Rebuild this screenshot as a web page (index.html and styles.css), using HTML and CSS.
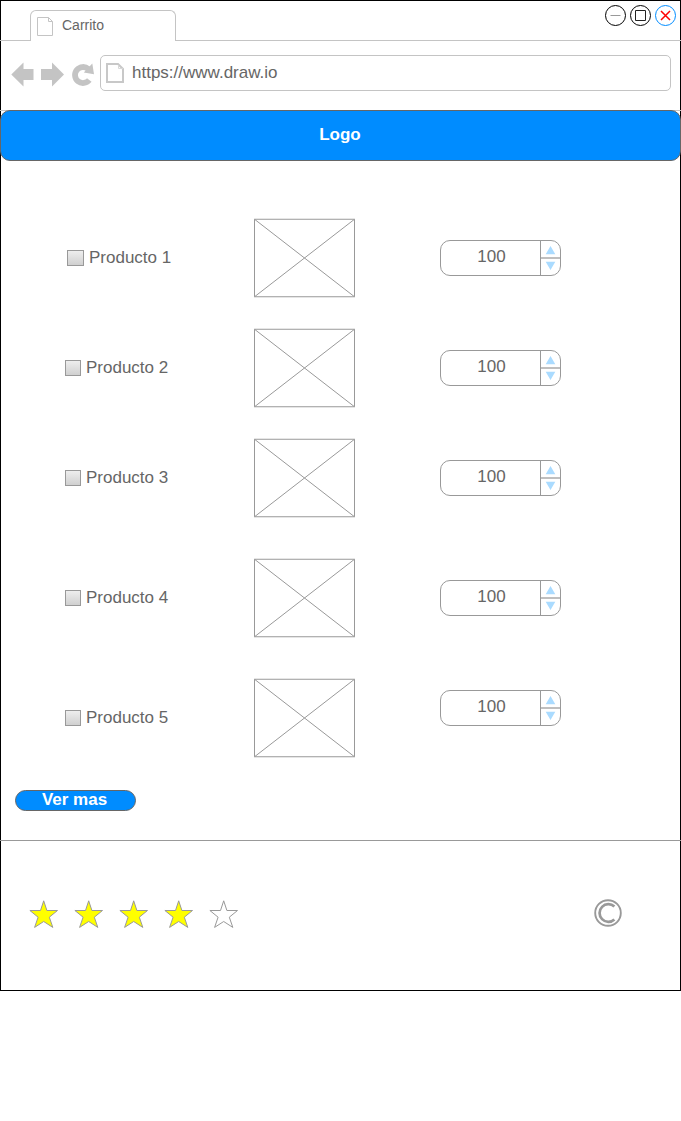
FILE: index.html
```html
<!DOCTYPE html>
<html lang="es">
<head>
<meta charset="utf-8">
<title>Carrito</title>
<link rel="stylesheet" href="styles.css">
</head>
<body>
<svg class="defs" width="0" height="0">
  <defs>
    <symbol id="placeholder" viewBox="0 0 101 80">
      <path d="M.5 1.250h100v77.500H.5zM.5 1.250l100 77.500M.5 78.750l100-77.500" fill="none" stroke="#999"/>
    </symbol>
    <symbol id="steps" viewBox="0 0 19 34">
      <path d="M4.700 13.200l4.800-8.300 4.800 8.300zM4.700 20.800h9.600l-4.800 8.300z" fill="#aadbff"/>
      <path d="M0 17h19" stroke="#aaa" stroke-width="1.500"/>
    </symbol>
    <symbol id="star" viewBox="0 0 30 30">
      <path d="M14.700 1.800L17.900 11.500H28.500L20.300 18.200 23.800 28.400 14.700 22.500 5.600 28.400 9.100 18.200.9 11.500H11.500z" stroke="#999"/>
    </symbol>
  </defs>
</svg>
<div class="window">
  <div class="tabs">
    <div class="tab">
      <svg width="16" height="19" viewBox="0 0 16 19"><path d="M.5.5h11l4 4v14H.5zM11.500.5v4h4" fill="none" stroke="#c4c4c4"/></svg>
      <span>Carrito</span>
    </div>
    <div class="controls">
      <svg width="21" height="21" viewBox="0 0 21 21" fill="none"><circle cx="10.500" cy="10.500" r="10" stroke="#000"/><path d="M5.500 10.500h10" stroke="#999"/></svg>
      <svg width="21" height="21" viewBox="0 0 21 21" fill="none"><circle cx="10.500" cy="10.500" r="10" stroke="#000"/><path d="M5.500 5.500h10v10h-10z" stroke="#222"/></svg>
      <svg width="21" height="21" viewBox="0 0 21 21" fill="none"><circle cx="10.500" cy="10.500" r="10" stroke="#008cff"/><path d="M6 6l9 9M15 6l-9 9" stroke="#f00" stroke-width="1.500"/></svg>
    </div>
  </div>
  <div class="toolbar">
    <svg class="nav" width="99" height="30" viewBox="0 0 99 30">
      <path d="M10.300 14.500L22.500 2.500V9h10v11h-10v6.500zM63 14.500L51 2.500V9H40v11h11v6.500z" fill="#c4c4c4"/>
      <path d="M88.300 20A8 8 0 1 1 87.300 9" fill="none" stroke="#c4c4c4" stroke-width="5.800"/>
      <path d="M91.300 3.500L93 14.200 82.800 12.600z" fill="#c4c4c4"/>
    </svg>
    <div class="address">
      <svg width="18" height="20" viewBox="0 0 18 20"><path d="M1 1h11L17 6v13H1z" fill="none" stroke="#c8c8c8" stroke-width="2"/><path d="M12.500 2v3.500H17" fill="none" stroke="#d8d8d8"/></svg>
      <span>https://www.draw.io</span>
    </div>
  </div>
  <div class="logo-bar"><header class="logo">Logo</header></div>
  <main class="products">
    <div class="product first">
      <label class="name"><i class="check"></i>Producto 1</label>
      <svg class="photo"><use href="#placeholder"/></svg>
      <div class="spinner"><span>100</span><svg><use href="#steps"/></svg></div>
    </div>
    <div class="product">
      <label class="name"><i class="check"></i>Producto 2</label>
      <svg class="photo"><use href="#placeholder"/></svg>
      <div class="spinner"><span>100</span><svg><use href="#steps"/></svg></div>
    </div>
    <div class="product">
      <label class="name"><i class="check"></i>Producto 3</label>
      <svg class="photo"><use href="#placeholder"/></svg>
      <div class="spinner"><span>100</span><svg><use href="#steps"/></svg></div>
    </div>
    <div class="product spaced">
      <label class="name"><i class="check"></i>Producto 4</label>
      <svg class="photo"><use href="#placeholder"/></svg>
      <div class="spinner"><span>100</span><svg><use href="#steps"/></svg></div>
    </div>
    <div class="product spaced last">
      <label class="name"><i class="check"></i>Producto 5</label>
      <svg class="photo"><use href="#placeholder"/></svg>
      <div class="spinner"><span>100</span><svg><use href="#steps"/></svg></div>
    </div>
    <div class="more">Ver mas</div>
  </main>
  <footer class="footer">
    <div class="rating">
      <svg class="star on"><use href="#star"/></svg>
      <svg class="star on"><use href="#star"/></svg>
      <svg class="star on"><use href="#star"/></svg>
      <svg class="star on"><use href="#star"/></svg>
      <svg class="star"><use href="#star"/></svg>
    </div>
    <svg width="28" height="28" viewBox="0 0 28 28" fill="none" stroke="#999"><circle cx="14" cy="14" r="12.800" stroke-width="1.900"/><path d="M20.400 7.600a8.800 8.800 0 1 0 0 12.800" stroke-width="2.700"/></svg>
  </footer>
</div>
</body>
</html>
```

FILE: styles.css
```css
* { box-sizing: border-box; }
body {
  margin: 0;
  background: #fff;
  color: #666;
  font: 17px/20px "Liberation Sans", Arial, sans-serif;
}
svg { display: block; flex: none; }
.defs { position: absolute; }
.window {
  width: 681px;
  height: 991px;
  border: 1px solid #000;
}
.tabs {
  display: flex;
  justify-content: space-between;
  height: 40px;
  margin: 0 -1px;
  border-bottom: 1px solid #c4c4c4;
}
.tab {
  display: flex;
  gap: 9px;
  width: 146px;
  height: 31px;
  margin: 9px 0 0 30px;
  padding: 6px 0 0 6px;
  border: 1px solid #c4c4c4;
  border-bottom: 0;
  border-radius: 6px 6px 0 0;
  background: #fff;
  font-size: 14px;
  line-height: 17px;
}
.controls {
  display: flex;
  gap: 4px;
  padding: 4px 5px 0 0;
}
.toolbar {
  display: flex;
  height: 69px;
  padding: 14px 9px 0 0;
}
.nav { margin-top: 5px; }
.address {
  display: flex;
  flex: 1;
  gap: 8px;
  height: 36px;
  padding: 7px 0 0 5px;
  border: 1px solid #c4c4c4;
  border-radius: 5px;
  line-height: 20px;
}
.logo-bar {
  margin: 0 -1px;
  border-top: 1px solid #c4c4c4;
}
.logo {
  height: 51px;
  margin-top: -1px;
  padding-right: 1px;
  border: 1px solid #666;
  border-radius: 10px;
  background: #008cff;
  color: #fff;
  font-weight: bold;
  line-height: 47px;
  text-align: center;
}
.products {
  height: 679px;
  padding: 57px 0 0 14px;
}
.product {
  display: grid;
  grid-template-columns: 189px 186px 121px;
  align-items: center;
  height: 80px;
  margin: 0 0 30px 50px;
}
.product.spaced { margin-top: 40px; }
.product:has(+ .spaced) { margin-bottom: 0; }
.name {
  display: flex;
  align-items: center;
  gap: 5px;
}
.first .name { padding-left: 2px; gap: 6px; }
.first .check { width: 17px; margin-right: -1px; }
.check {
  width: 16px;
  height: 16px;
  border: 1px solid #999;
  background: linear-gradient(#eee, #d0d0d0);
}
.photo { width: 101px; height: 80px; }
.spinner {
  display: flex;
  width: 121px;
  height: 36px;
  border: 1px solid #999;
  border-radius: 10px;
}
.last .spinner { margin-top: -20px; }
.spinner span {
  width: 100px;
  padding-left: 2px;
  border-right: 1px solid #999;
  line-height: 32px;
  text-align: center;
}
.spinner svg { width: 19px; height: 34px; }
.last { margin-bottom: 0; }
.more {
  width: 121px;
  height: 21px;
  margin-top: 32px;
  padding-right: 2px;
  border: 1px solid #666;
  border-radius: 11px;
  background: #008cff;
  color: #fff;
  font-weight: bold;
  line-height: 17px;
  text-align: center;
}
.footer {
  display: flex;
  justify-content: space-between;
  margin: 0 -1px;
  padding: 58px 59px 0 29px;
  border-top: 1px solid #999;
}
.rating { display: flex; gap: 15px; }
.star { width: 30px; height: 30px; fill: #fff; }
.star.on { fill: #ff0; }
```
